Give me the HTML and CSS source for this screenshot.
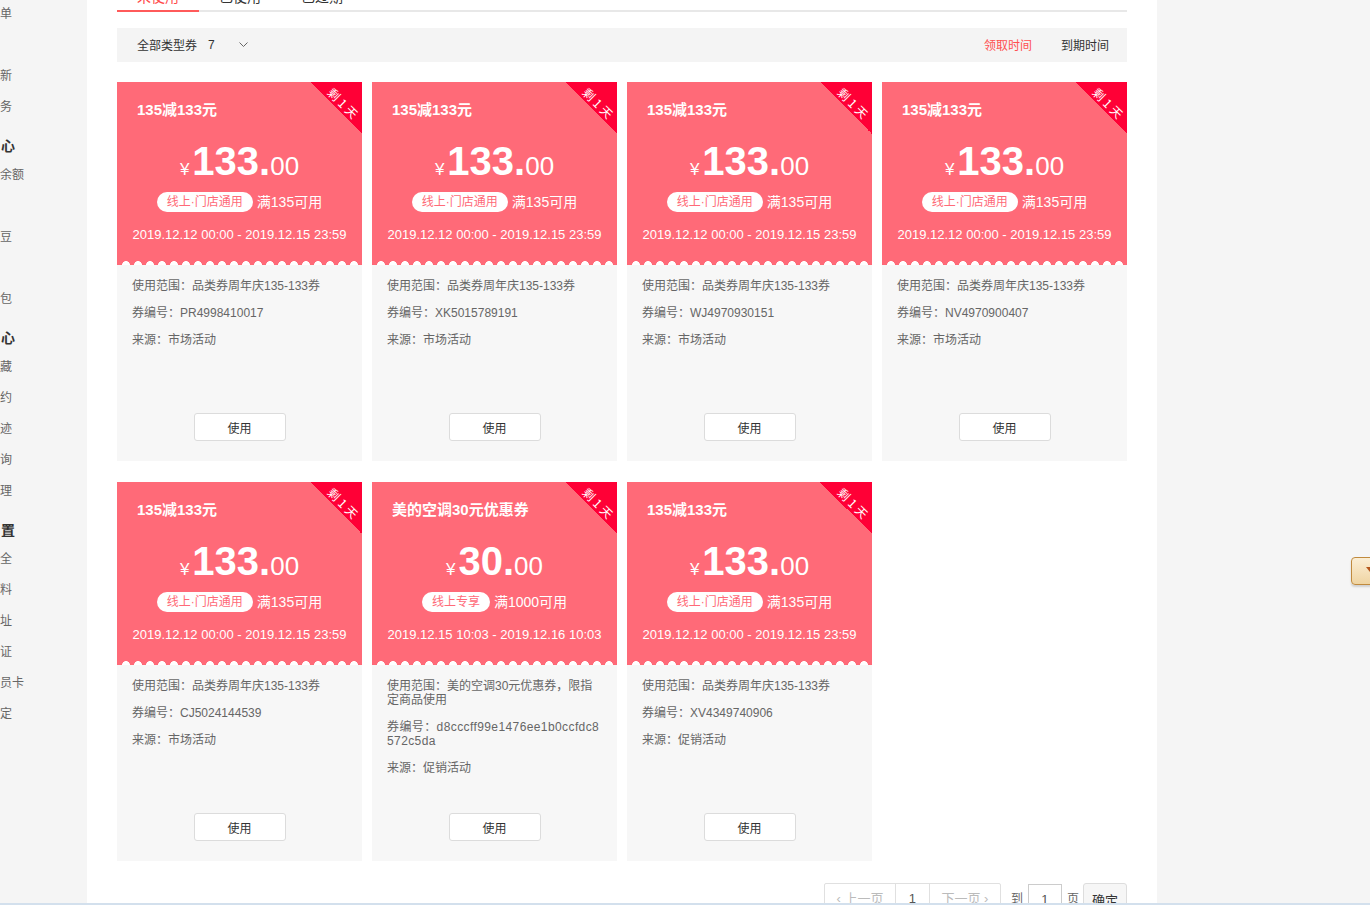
FILE: index.html
```html
<!DOCTYPE html>
<html lang="zh-CN">
<head>
<meta charset="utf-8">
<title>我的优惠券</title>
<link rel="stylesheet" href="styles.css">
</head>
<body>
<div class="page">
  <aside class="side">
    <div class="side-item">单</div>
    <div class="side-item"></div>
    <div class="side-item">新</div>
    <div class="side-item">务</div>
    <div class="side-title">心</div>
    <div class="side-item">余额</div>
    <div class="side-item"></div>
    <div class="side-item">豆</div>
    <div class="side-item"></div>
    <div class="side-item">包</div>
    <div class="side-title">心</div>
    <div class="side-item">藏</div>
    <div class="side-item">约</div>
    <div class="side-item">迹</div>
    <div class="side-item">询</div>
    <div class="side-item">理</div>
    <div class="side-title">置</div>
    <div class="side-item">全</div>
    <div class="side-item">料</div>
    <div class="side-item">址</div>
    <div class="side-item">证</div>
    <div class="side-item">员卡</div>
    <div class="side-item">定</div>
  </aside>

  <main class="main">
    <div class="tabs">
      <div class="tab active">未使用</div>
      <div class="tab">已使用</div>
      <div class="tab">已过期</div>
    </div>

    <div class="filter">
      <div class="filter-left">
        <span>全部类型券</span>
        <span class="count">7</span>
        <svg class="chev" width="9" height="5" viewBox="0 0 9 5"><path d="M0.5 0.5 L4.5 4.5 L8.5 0.5" fill="none" stroke="#666" stroke-width="1"/></svg>
      </div>
      <div class="filter-right">
        <span class="sort active">领取时间</span>
        <span class="sort">到期时间</span>
      </div>
    </div>

    <div class="grid">
      <div class="card">
        <div class="card-head">
          <div class="ribbon"><span>剩1天</span></div>
          <div class="title">135减133元</div>
          <div class="price"><span class="yen">¥</span><span class="big">133.</span><span class="dec">00</span></div>
          <div class="cond"><span class="pill">线上·门店通用</span><span class="full">满135可用</span></div>
          <div class="date">2019.12.12 00:00 - 2019.12.15 23:59</div>
        </div>
        <div class="card-body">
          <p>使用范围：品类券周年庆135-133券</p>
          <p>券编号：PR4998410017</p>
          <p>来源：市场活动</p>
          <button class="use">使用</button>
        </div>
      </div>

      <div class="card">
        <div class="card-head">
          <div class="ribbon"><span>剩1天</span></div>
          <div class="title">135减133元</div>
          <div class="price"><span class="yen">¥</span><span class="big">133.</span><span class="dec">00</span></div>
          <div class="cond"><span class="pill">线上·门店通用</span><span class="full">满135可用</span></div>
          <div class="date">2019.12.12 00:00 - 2019.12.15 23:59</div>
        </div>
        <div class="card-body">
          <p>使用范围：品类券周年庆135-133券</p>
          <p>券编号：XK5015789191</p>
          <p>来源：市场活动</p>
          <button class="use">使用</button>
        </div>
      </div>

      <div class="card">
        <div class="card-head">
          <div class="ribbon"><span>剩1天</span></div>
          <div class="title">135减133元</div>
          <div class="price"><span class="yen">¥</span><span class="big">133.</span><span class="dec">00</span></div>
          <div class="cond"><span class="pill">线上·门店通用</span><span class="full">满135可用</span></div>
          <div class="date">2019.12.12 00:00 - 2019.12.15 23:59</div>
        </div>
        <div class="card-body">
          <p>使用范围：品类券周年庆135-133券</p>
          <p>券编号：WJ4970930151</p>
          <p>来源：市场活动</p>
          <button class="use">使用</button>
        </div>
      </div>

      <div class="card">
        <div class="card-head">
          <div class="ribbon"><span>剩1天</span></div>
          <div class="title">135减133元</div>
          <div class="price"><span class="yen">¥</span><span class="big">133.</span><span class="dec">00</span></div>
          <div class="cond"><span class="pill">线上·门店通用</span><span class="full">满135可用</span></div>
          <div class="date">2019.12.12 00:00 - 2019.12.15 23:59</div>
        </div>
        <div class="card-body">
          <p>使用范围：品类券周年庆135-133券</p>
          <p>券编号：NV4970900407</p>
          <p>来源：市场活动</p>
          <button class="use">使用</button>
        </div>
      </div>

      <div class="card">
        <div class="card-head">
          <div class="ribbon"><span>剩1天</span></div>
          <div class="title">135减133元</div>
          <div class="price"><span class="yen">¥</span><span class="big">133.</span><span class="dec">00</span></div>
          <div class="cond"><span class="pill">线上·门店通用</span><span class="full">满135可用</span></div>
          <div class="date">2019.12.12 00:00 - 2019.12.15 23:59</div>
        </div>
        <div class="card-body">
          <p>使用范围：品类券周年庆135-133券</p>
          <p>券编号：CJ5024144539</p>
          <p>来源：市场活动</p>
          <button class="use">使用</button>
        </div>
      </div>

      <div class="card">
        <div class="card-head">
          <div class="ribbon"><span>剩1天</span></div>
          <div class="title">美的空调30元优惠券</div>
          <div class="price"><span class="yen">¥</span><span class="big">30.</span><span class="dec">00</span></div>
          <div class="cond"><span class="pill">线上专享</span><span class="full">满1000可用</span></div>
          <div class="date">2019.12.15 10:03 - 2019.12.16 10:03</div>
        </div>
        <div class="card-body">
          <p>使用范围：美的空调30元优惠券，限指定商品使用</p>
          <p class="code">券编号：d8cccff99e1476ee1b0ccfdc8572c5da</p>
          <p>来源：促销活动</p>
          <button class="use">使用</button>
        </div>
      </div>

      <div class="card">
        <div class="card-head">
          <div class="ribbon"><span>剩1天</span></div>
          <div class="title">135减133元</div>
          <div class="price"><span class="yen">¥</span><span class="big">133.</span><span class="dec">00</span></div>
          <div class="cond"><span class="pill">线上·门店通用</span><span class="full">满135可用</span></div>
          <div class="date">2019.12.12 00:00 - 2019.12.15 23:59</div>
        </div>
        <div class="card-body">
          <p>使用范围：品类券周年庆135-133券</p>
          <p>券编号：XV4349740906</p>
          <p>来源：促销活动</p>
          <button class="use">使用</button>
        </div>
      </div>
    </div>

    <div class="pager">
      <div class="pager-group">
        <span class="pg prev">‹ 上一页</span>
        <span class="pg num">1</span>
        <span class="pg next">下一页 ›</span>
      </div>
      <span class="goto">到</span>
      <span class="page-input">1</span>
      <span class="goto unit">页</span>
      <button class="confirm">确定</button>
    </div>
  </main>
</div>

<div class="float-btn"><i class="float-arrow"></i></div>
<div class="bottom-line"></div>
</body>
</html>
```

FILE: styles.css
```css
html, body {
  margin: 0;
  padding: 0;
}

body {
  background: #f5f5f5;
  font-family: "Liberation Sans", "Noto Sans CJK SC", sans-serif;
  color: #333;
  overflow: hidden;
}

.page {
  display: flex;
  align-items: flex-start;
  margin-top: -30px;
}

/* sidebar */
.side {
  width: 87px;
  flex: none;
  padding-top: 29px;
  overflow: hidden;
}

.side-item {
  height: 31px;
  line-height: 31px;
  font-size: 12px;
  color: #666;
  white-space: nowrap;
}

.side-title {
  margin-top: 9px;
  height: 28px;
  line-height: 28px;
  font-size: 14px;
  font-weight: bold;
  color: #333;
  padding-left: 1px;
}

/* main */
.main {
  width: 1070px;
  flex: none;
  background: #fff;
  padding: 0 30px 40px;
  box-sizing: border-box;
  min-height: 980px;
}

.tabs {
  display: flex;
  border-bottom: 2px solid #e8e8e8;
}

.tab {
  width: 82px;
  height: 40px;
  box-sizing: border-box;
  padding-top: 20px;
  line-height: 14px;
  font-size: 14px;
  text-align: center;
  color: #333;
}

.tab.active {
  color: #ff4a4a;
  border-bottom: 2px solid #ff5a5a;
  margin-bottom: -2px;
  height: 42px;
}

/* filter */
.filter {
  margin-top: 16px;
  height: 34px;
  background: #f4f4f4;
  display: flex;
  align-items: center;
  justify-content: space-between;
  padding: 0 18px 1px 20px;
  box-sizing: border-box;
  font-size: 12px;
}

.filter-left {
  display: flex;
  align-items: center;
}

.count {
  margin-left: 11px;
}

.chev {
  margin-left: 24px;
  display: block;
}

.filter-right {
  display: flex;
  gap: 29px;
}

.sort {
  color: #333;
}

.sort.active {
  color: #ff5050;
}

/* grid */
.grid {
  margin-top: 20px;
  display: grid;
  grid-template-columns: repeat(4, 245px);
  column-gap: 10px;
  row-gap: 21px;
}

.card {
  height: 379px;
  display: flex;
  flex-direction: column;
}

.card-head {
  position: relative;
  height: 183px;
  flex: none;
  background: #ff6a78;
  color: #fff;
  text-align: center;
  overflow: hidden;
}

.card-head::after {
  content: "";
  position: absolute;
  left: 3px;
  right: 0;
  bottom: 0;
  height: 5px;
  background-image: radial-gradient(circle at 6px 5px, #fff 3.6px, rgba(255,255,255,0) 4.2px);
  background-size: 12px 5px;
  background-repeat: repeat-x;
}

.ribbon {
  position: absolute;
  top: 0;
  right: 0;
  width: 52px;
  height: 52px;
  background: linear-gradient(45deg, rgba(255,0,54,0) 50%, #ff0036 50%);
}

.ribbon span {
  position: absolute;
  left: 8px;
  top: 14px;
  width: 50px;
  line-height: 14px;
  font-size: 12px;
  letter-spacing: 3px;
  padding-left: 3px;
  box-sizing: border-box;
  text-align: center;
  white-space: nowrap;
  color: #fff;
  transform: rotate(45deg);
  font-family: "Noto Sans CJK SC", sans-serif;
}

.title {
  text-align: left;
  padding: 18px 0 0 20px;
  font-size: 15px;
  line-height: 20px;
  font-weight: bold;
}

.price {
  margin-top: 21px;
  height: 40px;
  line-height: 40px;
  font-size: 40px;
  white-space: nowrap;
}

.yen {
  font-size: 17px;
  margin-right: 3px;
}

.big {
  font-weight: bold;
  font-size: 40px;
}

.dec {
  font-size: 26px;
}

.cond {
  margin-top: 11px;
  height: 20px;
  line-height: 20px;
  white-space: nowrap;
}

.pill {
  display: inline-block;
  vertical-align: top;
  height: 20px;
  line-height: 20px;
  padding: 0 10px;
  border-radius: 10px;
  background: #fff;
  color: #ff6a78;
  font-size: 12px;
}

.full {
  display: inline-block;
  vertical-align: top;
  margin-left: 4px;
  font-size: 14px;
}

.date {
  margin-top: 13px;
  line-height: 20px;
  font-size: 13px;
  white-space: nowrap;
}

.card-body {
  flex: 1;
  background: #f7f7f7;
  padding: 14px 15px 20px;
  display: flex;
  flex-direction: column;
  font-size: 12px;
  color: #666;
}

.card-body p {
  margin: 0 0 13px;
  line-height: 14px;
}

.card-body p.code {
  word-break: break-all;
  letter-spacing: 0.4px;
}

.use {
  margin: auto auto 0;
  width: 92px;
  height: 28px;
  background: #fff;
  border: 1px solid #dcdcdc;
  border-radius: 3px;
  font-family: inherit;
  font-size: 12px;
  color: #333;
  padding: 0;
}

/* pager */
.pager {
  margin-top: 22px;
  display: flex;
  justify-content: flex-end;
  align-items: flex-start;
  font-size: 12px;
  color: #666;
}

.pager-group {
  display: flex;
  border: 1px solid #e0e0e0;
  border-radius: 2px;
}

.pg {
  height: 30px;
  line-height: 30px;
  text-align: center;
  color: #bbb;
  box-sizing: border-box;
  font-size: 13px;
}

.pg.prev {
  width: 71px;
  border-right: 1px solid #e0e0e0;
}

.pg.num {
  width: 34px;
  color: #555;
  border-right: 1px solid #e0e0e0;
}

.pg.next {
  width: 70px;
}

.goto {
  line-height: 32px;
  margin-left: 10px;
  color: #666;
  font-size: 12px;
}

.goto.unit {
  margin-left: 5px;
}

.page-input {
  margin-left: 5px;
  width: 34px;
  height: 30px;
  box-sizing: border-box;
  border: 1px solid #ccc;
  text-align: center;
  line-height: 30px;
  margin-top: 1px;
  color: #555;
  font-size: 13px;
}

.confirm {
  margin-left: 4px;
  width: 44px;
  height: 32px;
  border: 1px solid #ddd;
  border-radius: 3px;
  background: #f6f6f6;
  font-family: inherit;
  font-size: 13px;
  color: #333;
  padding: 0;
}

/* overlays */
.float-btn {
  position: fixed;
  left: 1351px;
  top: 557px;
  width: 30px;
  height: 26px;
  border: 1px solid #c08a3e;
  border-radius: 4px;
  background: linear-gradient(#fbeed5, #efd4a2);
  box-shadow: 0 2px 2px rgba(0,0,0,0.15);
}

.float-arrow {
  position: absolute;
  left: 14px;
  top: 9px;
  width: 0;
  height: 0;
  border-left: 4px solid transparent;
  border-right: 4px solid transparent;
  border-top: 5px solid #b5561c;
}

.bottom-line {
  position: fixed;
  left: 0;
  right: 0;
  bottom: 0;
  height: 2px;
  background: #d3e0ed;
}
```
